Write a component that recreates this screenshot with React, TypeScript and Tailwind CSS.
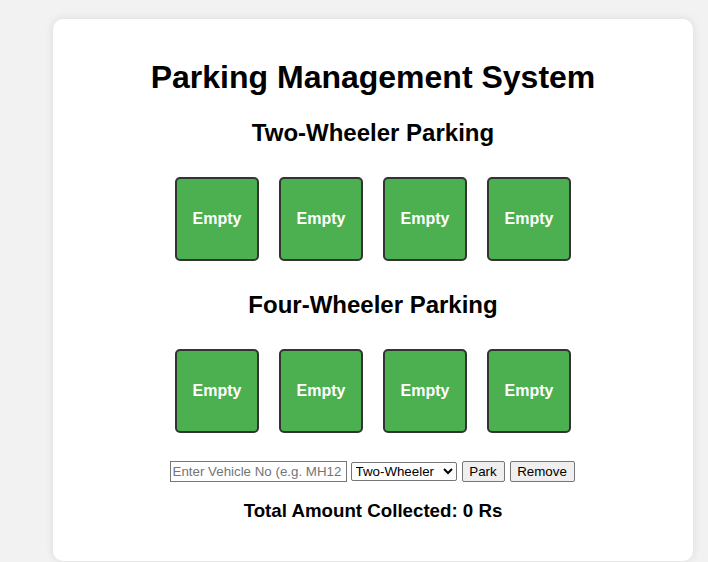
import React, { useState } from "react";

type Slot = { id: number; vehicle: string | null };

const makeSlots = (): Slot[] => [1, 2, 3, 4].map((id) => ({ id, vehicle: null }));

function SlotRow({ slots }: { slots: Slot[] }) {
  return (
    <div className="flex justify-center gap-[20px]">
      {slots.map((s) => (
        <div
          key={s.id}
          className={`flex h-[84px] w-[84px] items-center justify-center rounded-[5px] border-2 border-[#333] text-[16px] font-bold text-white ${
            s.vehicle ? "bg-[#f44336]" : "bg-[#4caf50]"
          }`}
        >
          {s.vehicle ?? "Empty"}
        </div>
      ))}
    </div>
  );
}

export default function App() {
  const [two] = useState<Slot[]>(makeSlots);
  const [four] = useState<Slot[]>(makeSlots);
  const [vehicleNo, setVehicleNo] = useState("");
  const [type, setType] = useState("two");
  const [total] = useState(0);

  return (
    <div className="min-h-[562px] bg-[#f2f2f2] pt-[19px] font-['Liberation_Sans',Arial,sans-serif] text-black">
      <div className="ml-[53px] flex w-[640px] flex-col items-center rounded-[10px] bg-white pt-[40px] pb-[39px] shadow-[0_0_10px_rgba(0,0,0,0.1)]">
        <h1 className="text-[32px] leading-[37px] font-bold">Parking Management System</h1>

        <h2 className="mt-[23px] text-[24px] leading-[28px] font-bold">Two-Wheeler Parking</h2>
        <div className="mt-[30px]">
          <SlotRow slots={two} />
        </div>

        <h2 className="mt-[30px] text-[24px] leading-[28px] font-bold">Four-Wheeler Parking</h2>
        <div className="mt-[30px]">
          <SlotRow slots={four} />
        </div>

        {/* Controls */}
        <div className="mt-[28px] flex items-center gap-[4px] pr-[2px] text-[13.33px]">
          <input
            value={vehicleNo}
            onChange={(e) => setVehicleNo(e.target.value)}
            placeholder="Enter Vehicle No (e.g. MH12"
            className="h-[21px] w-[177px] border border-[#767676] px-[2px] text-[13.33px] placeholder:text-[#757575]"
          />
          <select
            value={type}
            onChange={(e) => setType(e.target.value)}
            className="h-[19px] w-[106px] rounded-[2px] border border-[#767676] bg-white text-[13.33px]"
          >
            <option value="two">Two-Wheeler</option>
            <option value="four">Four-Wheeler</option>
          </select>
          <button className="ml-[1px] h-[21px] w-[43px] rounded-[2px] border border-[#767676] bg-[#efefef] text-[13.33px]">
            Park
          </button>
          <button className="ml-[1px] h-[21px] w-[65px] rounded-[2px] border border-[#767676] bg-[#efefef] text-[13.33px]">
            Remove
          </button>
        </div>

        <h3 className="mt-[18px] text-[18.72px] leading-[22px] font-bold">
          Total Amount Collected: {total} Rs
        </h3>
      </div>
    </div>
  );
}
